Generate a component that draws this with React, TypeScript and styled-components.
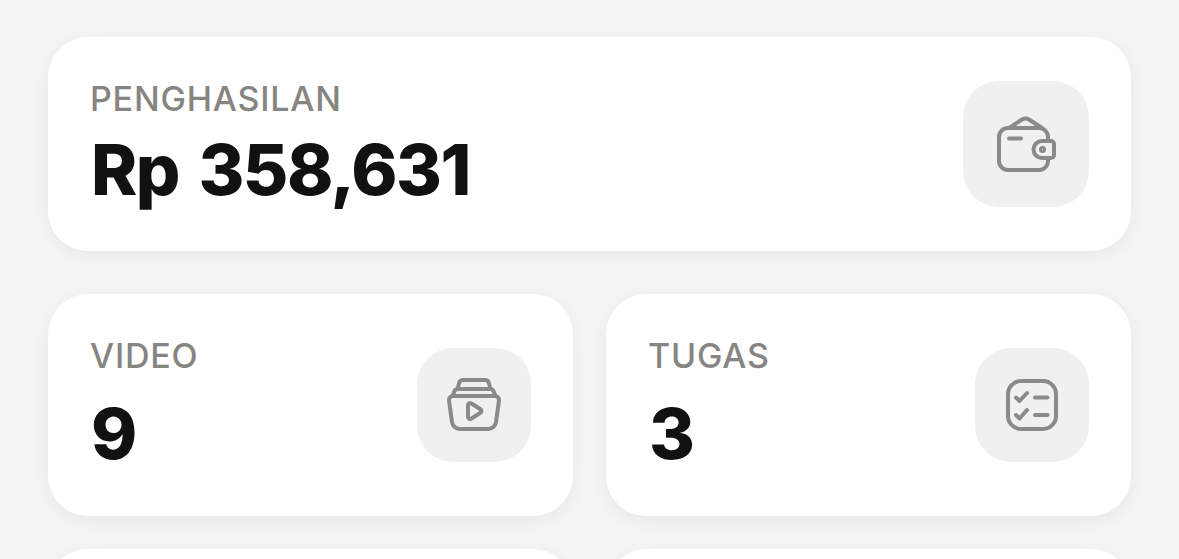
import React from "react"
import styled, { createGlobalStyle } from "styled-components"

const GlobalStyle = createGlobalStyle`
  html, body {
    margin: 0;
    height: 559px;
    overflow: hidden;
    background-color: #f4f4f4;
    font-family: "Inter", "Noto Sans", sans-serif;
  }
`;

const Page = styled.div`
  display: flex;
  flex-direction: column;
  padding: 37px 48px 0;
`;

const Card = styled.div<{ $height: number }>`
  box-sizing: border-box;
  height: ${props => props.$height}px;
  padding: 0 42px 0 43px;
  display: flex;
  align-items: center;
  justify-content: space-between;
  background-color: #fff;
  border-radius: 40px;
  box-shadow: 0 4px 18px rgba(0, 0, 0, 0.05);
`;

const Grid = styled.div`
  display: grid;
  grid-template-columns: repeat(2, 1fr);
  gap: 33px;
  margin-top: 43px;
`;

const Text = styled.div`
  display: flex;
  flex-direction: column;
`;

const Label = styled.span`
  margin-left: -1px;
  color: #868581;
  font-size: 34px;
  line-height: 40px;
  font-weight: 450;
  letter-spacing: 0.8px;
`;

const Value = styled.span<{ $gap: number }>`
  margin-top: ${props => props.$gap}px;
  color: #111;
  font-size: 70px;
  line-height: 80px;
  font-weight: 850;
  letter-spacing: -1.6px;
  word-spacing: 6px;
`;

const IconBox = styled.div<{ $size: number }>`
  width: ${props => props.$size}px;
  height: ${props => props.$size}px;
  display: flex;
  align-items: center;
  justify-content: center;
  flex-shrink: 0;
  background-color: #f0f0f0;
  border-radius: 36px;
`;

const Icon = styled.svg.attrs({
  viewBox: "0 0 60 60",
  fill: "none",
  stroke: "#8a8a88",
  strokeWidth: 4,
  strokeLinecap: "round",
  strokeLinejoin: "round",
})`
  width: 60px;
  height: 60px;
`;

const WalletIcon = () => <Icon>
  <path d="M13 14 L26 5.5 Q29.500 3.500 33 5.500 L46 14" />
  <path d="M52 27 V23 A9 9 0 0 0 43 14 H12 A9 9 0 0 0 3 23 V47 A9 9 0 0 0 12 56 H43 A9 9 0 0 0 52 47 V44.500" />
  <path d="M46 27 H55 A3 3 0 0 1 58 30 V41 A3 3 0 0 1 55 44 H46 A8.500 8.500 0 0 1 46 27 Z" />
  <path d="M13 24.500 H25" />
  <circle cx="46.500" cy="35.500" r="1.500" />
</Icon>

const VideoIcon = () => <Icon>
  <path d="M9 21 H51 A4 4 0 0 1 55 25.500 L52 47 A8 8 0 0 1 44 54 H16 A8 8 0 0 1 8 47 L5 25.500 A4 4 0 0 1 9 21 Z" />
  <path d="M9 20 L10.500 16 Q11.500 14 14 14 H46 Q48.500 14 49.500 16 L51 20" />
  <path d="M14 12 L15.500 7 Q16.500 5 19 5 H41 Q43.500 5 44.500 7 L46 12" />
  <path d="M24 30 A2 2 0 0 1 27 28.300 L36.500 34.300 A2 2 0 0 1 36.500 37.700 L27 43.700 A2 2 0 0 1 24 42 Z" />
</Icon>

const TasksIcon = () => <Icon>
  <rect x="6" y="6" width="48" height="48" rx="13" />
  <path d="M14 22.500 L17.500 26 L25 18" />
  <path d="M14 40 L17.500 43.500 L25 35" />
  <path d="M33 22.500 H45.500" />
  <path d="M33 40 H45.500" />
</Icon>

export default function App() {
  return <>
    <GlobalStyle />
    <Page>
      <Card $height={214}>
        <Text>
          <Label>PENGHASILAN</Label>
          <Value $gap={11}>Rp 358,631</Value>
        </Text>
        <IconBox $size={126}><WalletIcon /></IconBox>
      </Card>
      <Grid>
        <Card $height={222}>
          <Text>
            <Label>VIDEO</Label>
            <Value $gap={18}>9</Value>
          </Text>
          <IconBox $size={114}><VideoIcon /></IconBox>
        </Card>
        <Card $height={222}>
          <Text>
            <Label>TUGAS</Label>
            <Value $gap={18}>3</Value>
          </Text>
          <IconBox $size={114}><TasksIcon /></IconBox>
        </Card>
        <Card $height={222} />
        <Card $height={222} />
      </Grid>
    </Page>
  </>
}
